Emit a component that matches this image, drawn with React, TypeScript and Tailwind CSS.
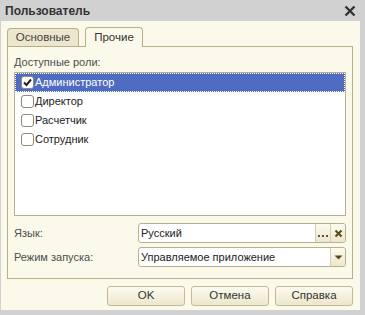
import React from 'react';

const roles = [
  { name: 'Администратор', checked: true },
  { name: 'Директор', checked: false },
  { name: 'Расчетчик', checked: false },
  { name: 'Сотрудник', checked: false },
];

function Checkbox({ checked }: { checked: boolean }) {
  return (
    <div className="w-[13px] h-[13px] rounded-[3px] border border-[#8f8a75] bg-white flex items-center justify-center shrink-0">
      {checked && (
        <svg width="11" height="11" viewBox="0 0 11 11">
          <path d="M2 5.5 L4.5 8 L9 2.5" fill="none" stroke="#222" strokeWidth="2" />
        </svg>
      )}
    </div>
  );
}

function Button({ label }: { label: string }) {
  return (
    <div className="w-[78px] h-[20px] rounded-[3px] border border-[#c2ba95] bg-gradient-to-b from-[#fdfbf1] to-[#ece6cb] flex items-center justify-center text-[11.5px] text-[#333]">
      {label}
    </div>
  );
}

export default function App() {
  return (
    <div
      className="w-[365px] h-[315px] bg-[#d1d1d1] flex flex-col text-[#333]"
      style={{ fontFamily: '"Liberation Sans", Arial, sans-serif' }}
    >
      <div className="h-[21px] flex items-center justify-between pl-[5px] pr-[9px] shrink-0">
        <span className="text-[12px] font-bold text-[#333]">Пользователь</span>
        <svg width="12" height="12" viewBox="0 0 12 12">
          <path d="M1.5 1.5 L10.5 10.5 M10.5 1.5 L1.5 10.5" stroke="#333" strokeWidth="2.4" />
        </svg>
      </div>

      <div className="flex-1 ml-[1px] mr-[5px] mb-[5px] bg-[#fbf9ea] flex flex-col pl-[6px] pr-[7px]">
        <div className="flex items-end gap-[6px] mt-[5px] h-[20px]">
          <div className="w-[72px] h-[18px] rounded-t-[4px] border border-b-0 border-[#b8b08c] bg-[#ede6cc] flex items-center justify-center text-[11.5px] text-[#444]">
            Основные
          </div>
          <div className="w-[58px] h-[20px] rounded-t-[4px] border border-b-0 border-[#b8b08c] bg-[#fbf9ea] flex items-center justify-center text-[11.5px] text-[#333] relative -mb-px z-10">
            Прочие
          </div>
        </div>

        <div className="h-[233px] border border-[#b8b08c] flex flex-col px-[6px]">
          <div className="mt-[8px] h-[15px] leading-[15px] text-[11px] text-[#4d4d4d]">Доступные роли:</div>
          <div className="mt-[2px] h-[144px] border border-[#b8b08c] bg-white flex flex-col">
            {roles.map((r, i) => (
              <div
                key={r.name}
                className={
                  i === 0
                    ? 'h-[19px] flex items-center gap-[1px] pl-[5px] bg-[#506bc2] text-white text-[11px] border border-dotted border-white'
                    : 'h-[19px] flex items-center gap-[1px] pl-[6px] text-[11px] text-[#222]'
                }
              >
                <Checkbox checked={r.checked} />
                <span>{r.name}</span>
              </div>
            ))}
          </div>

          <div className="mt-[7px] flex items-center h-[20px]">
            <span className="w-[124px] text-[11px] text-[#4d4d4d]">Язык:</span>
            <div className="flex-1 h-[20px] rounded-[3px] border border-[#b8b08c] bg-white flex items-center">
              <span className="flex-1 pl-[2px] text-[11px] text-[#222]">Русский</span>
              <div className="w-[15px] h-full border-l border-[#d5ceb0] bg-gradient-to-b from-[#fdfbf1] to-[#ece6cb] flex items-end justify-center pb-[4px]">
                <svg width="11" height="3" viewBox="0 0 11 3">
                  <rect x="0" y="0" width="2" height="2" fill="#555" />
                  <rect x="4" y="0" width="2" height="2" fill="#555" />
                  <rect x="8" y="0" width="2" height="2" fill="#555" />
                </svg>
              </div>
              <div className="w-[15px] h-full border-l border-[#d5ceb0] rounded-r-[3px] bg-gradient-to-b from-[#fdfbf1] to-[#ece6cb] flex items-center justify-center">
                <svg width="9" height="9" viewBox="0 0 9 9">
                  <path d="M1.5 1.5 L7.5 7.5 M7.5 1.5 L1.5 7.5" stroke="#5a4a1a" strokeWidth="2" />
                </svg>
              </div>
            </div>
          </div>

          <div className="mt-[4px] flex items-center h-[20px]">
            <span className="w-[124px] text-[11px] text-[#4d4d4d]">Режим запуска:</span>
            <div className="flex-1 h-[20px] rounded-[3px] border border-[#b8b08c] bg-white flex items-center">
              <span className="flex-1 pl-[2px] text-[11px] text-[#222]">Управляемое приложение</span>
              <div className="w-[15px] h-full border-l border-[#d5ceb0] rounded-r-[3px] bg-gradient-to-b from-[#fdfbf1] to-[#ece6cb] flex items-center justify-center">
                <svg width="9" height="5" viewBox="0 0 9 5">
                  <path d="M0.5 0.5 L8.5 0.5 L4.5 4.5 Z" fill="#5a4a1a" />
                </svg>
              </div>
            </div>
          </div>
        </div>

        <div className="mt-[7px] flex justify-end gap-[6px]">
          <Button label="OK" />
          <Button label="Отмена" />
          <Button label="Справка" />
        </div>
      </div>
    </div>
  );
}
